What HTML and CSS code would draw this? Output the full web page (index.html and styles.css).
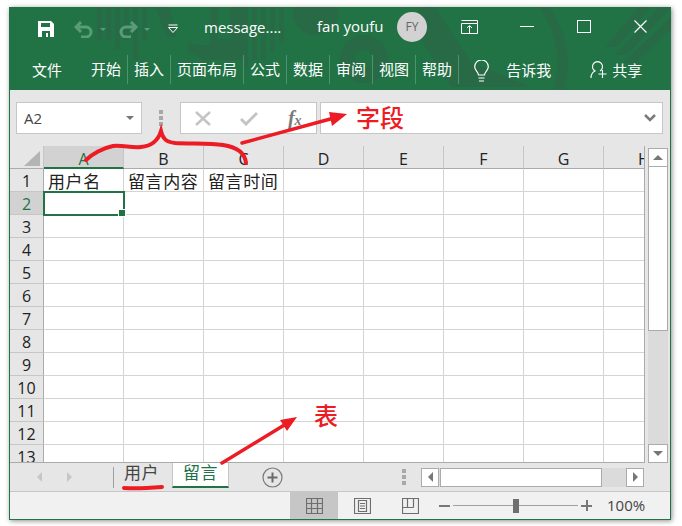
FILE: index.html
```html
<!DOCTYPE html>
<html lang="zh-CN">
<head>
    <meta charset="UTF-8">
    <title>message - Excel</title>
    <link rel="stylesheet" href="styles.css">
</head>
<body>
<div class="window">
    <header class="ribbon">
        <svg class="pattern" width="662" height="83" viewBox="0 0 662 83">
            <g fill="#286a45">
                <rect x="88" y="0" width="5" height="33"/><rect x="97" y="0" width="5" height="33"/><rect x="106" y="0" width="5" height="42"/>
                <rect x="115" y="0" width="5" height="33"/><rect x="124" y="0" width="5" height="53"/><rect x="133" y="0" width="5" height="33"/>
                <path d="M146 0h14l8 30h-10zM170 0h9v45l16 8h40V0h-14v32h-12V0h-8v38h-14l-8-3V0h-9z"/>
                <rect x="225" y="0" width="5" height="45"/><rect x="234" y="0" width="5" height="60"/><rect x="243" y="0" width="5" height="53"/>
                <rect x="252" y="0" width="5" height="53"/><rect x="261" y="0" width="5" height="45"/><rect x="270" y="0" width="5" height="36"/>
                <path d="M284 0h45v10a23 23 0 0 1-45 0z"/>
                <path d="M355 28a24 24 0 1 0 .1 0zm0 15a9 9 0 1 1-.1 0z"/>
                <path d="M410 0h16l36 55 60 25h-80l-32-50zM530 0h10a100 100 0 0 1 16 82h-12a90 90 0 0 0-14-82z"/>
                <path d="M630 0h12l-34 40h-12zM650 0h12l-44 48h-12zM662 10v12l-36 34h-12z"/>
            </g>
        </svg>
        <div class="titlebar">
            <svg class="save" width="18" height="18" viewBox="0 0 18 18"><path fill="#fff" d="M1 1h13l3 3v13H1z"/><path fill="#217346" d="M4 3h9v4H4zM5 11h8v6h-2v-4H9v4H5z"/></svg>
            <svg class="undo" width="34" height="18" viewBox="0 0 34 18"><path fill="none" stroke="#5a9c78" stroke-width="3" d="M2 7h10a5 5 0 0 1 0 10H7M7 2L2 7l5 5"/><path fill="#5a9c78" d="M26 8h6l-3 3z"/></svg>
            <svg class="redo" width="34" height="18" viewBox="0 0 34 18"><path fill="none" stroke="#5a9c78" stroke-width="3" d="M17 7H7a5 5 0 0 0 0 10h5M12 2l5 5-5 5"/><path fill="#5a9c78" d="M25 8h6l-3 3z"/></svg>
            <svg class="qat-more" width="10" height="10" viewBox="0 0 10 10"><path fill="none" stroke="#fff" d="M.5 3.500h9L5 8.500zM.5 1h9"/></svg>
            <span class="doc-name">message....</span>
            <span class="user-name">fan youfu</span>
            <span class="avatar">FY</span>
            <svg class="display-btn" width="18" height="14" viewBox="0 0 18 14"><path fill="none" stroke="#fff" d="M.5 3.500h16v10H.5zM.5.5h16v3M8.500 13V6M6 8l2.500-2.500L11 8"/></svg>
            <span class="min-btn"></span>
            <span class="max-btn"></span>
            <svg class="close-btn" width="13" height="13" viewBox="0 0 13 13"><path fill="none" stroke="#fff" stroke-width="1.200" d="M.5.5l12 12M12.500.5l-12 12"/></svg>
        </div>
        <nav class="menu">
            <span class="tab-file">文件</span>
            <span class="tab">开始</span>
            <span class="tab">插入</span>
            <span class="tab">页面布局</span>
            <span class="tab">公式</span>
            <span class="tab">数据</span>
            <span class="tab">审阅</span>
            <span class="tab">视图</span>
            <span class="tab tab-last">帮助</span>
            <svg class="bulb" width="15" height="23" viewBox="0 0 15 23"><path fill="none" stroke="#fff" stroke-width="1.200" d="M4.500 15c0-3-3.800-4.500-3.800-8.300a6.800 6.800 0 0 1 13.600 0C14.300 10.500 10.500 12 10.500 15zM4.500 18h6M5 21h5"/></svg>
            <span class="tell">告诉我</span>
            <svg class="share" width="17" height="19" viewBox="0 0 17 19"><path fill="none" stroke="#fff" stroke-width="1.100" d="M1 18c0-4 2-6 4-7a5 5 0 1 1 5 0M12.500 10v8M8.500 14h8"/></svg>
            <span class="share-text">共享</span>
        </nav>
    </header>

    <section class="formula-bar">
        <div class="name-box"><span>A2</span><i class="caret"></i></div>
        <div class="dots"><i></i><i></i><i></i></div>
        <div class="fx-box">
            <svg width="16" height="15" viewBox="0 0 16 15"><path fill="none" stroke="#c4c4c4" stroke-width="2.500" d="M1 1l14 13M15 1L1 14"/></svg>
            <svg width="18" height="15" viewBox="0 0 18 15"><path fill="none" stroke="#c4c4c4" stroke-width="3" d="M1 8l5 5L17 2"/></svg>
            <span class="fx">f<sub>x</sub></span>
        </div>
        <div class="formula-input"><svg width="12" height="8" viewBox="0 0 12 8"><path fill="none" stroke="#7a7a7a" stroke-width="2.500" d="M1 1l5 5 5-5"/></svg></div>
    </section>

    <section class="sheet">
        <div class="grid">
            <div class="row head">
                <div class="corner"><i></i></div>
                <div class="col active">A</div><div class="col">B</div><div class="col">C</div><div class="col">D</div><div class="col">E</div><div class="col">F</div><div class="col">G</div><div class="col last">H</div>
            </div>
            <div class="row"><div class="rh">1</div><div class="c">用户名</div><div class="c">留言内容</div><div class="c">留言时间</div><div class="c"></div><div class="c"></div><div class="c"></div><div class="c"></div><div class="c end"></div></div>
            <div class="row"><div class="rh active">2</div><div class="c selected"></div><div class="c"></div><div class="c"></div><div class="c"></div><div class="c"></div><div class="c"></div><div class="c"></div><div class="c end"></div></div>
            <div class="row"><div class="rh">3</div><div class="c"></div><div class="c"></div><div class="c"></div><div class="c"></div><div class="c"></div><div class="c"></div><div class="c"></div><div class="c end"></div></div>
            <div class="row"><div class="rh">4</div><div class="c"></div><div class="c"></div><div class="c"></div><div class="c"></div><div class="c"></div><div class="c"></div><div class="c"></div><div class="c end"></div></div>
            <div class="row"><div class="rh">5</div><div class="c"></div><div class="c"></div><div class="c"></div><div class="c"></div><div class="c"></div><div class="c"></div><div class="c"></div><div class="c end"></div></div>
            <div class="row"><div class="rh">6</div><div class="c"></div><div class="c"></div><div class="c"></div><div class="c"></div><div class="c"></div><div class="c"></div><div class="c"></div><div class="c end"></div></div>
            <div class="row"><div class="rh">7</div><div class="c"></div><div class="c"></div><div class="c"></div><div class="c"></div><div class="c"></div><div class="c"></div><div class="c"></div><div class="c end"></div></div>
            <div class="row"><div class="rh">8</div><div class="c"></div><div class="c"></div><div class="c"></div><div class="c"></div><div class="c"></div><div class="c"></div><div class="c"></div><div class="c end"></div></div>
            <div class="row"><div class="rh">9</div><div class="c"></div><div class="c"></div><div class="c"></div><div class="c"></div><div class="c"></div><div class="c"></div><div class="c"></div><div class="c end"></div></div>
            <div class="row"><div class="rh">10</div><div class="c"></div><div class="c"></div><div class="c"></div><div class="c"></div><div class="c"></div><div class="c"></div><div class="c"></div><div class="c end"></div></div>
            <div class="row"><div class="rh">11</div><div class="c"></div><div class="c"></div><div class="c"></div><div class="c"></div><div class="c"></div><div class="c"></div><div class="c"></div><div class="c end"></div></div>
            <div class="row"><div class="rh">12</div><div class="c"></div><div class="c"></div><div class="c"></div><div class="c"></div><div class="c"></div><div class="c"></div><div class="c"></div><div class="c end"></div></div>
            <div class="row"><div class="rh">13</div><div class="c"></div><div class="c"></div><div class="c"></div><div class="c"></div><div class="c"></div><div class="c"></div><div class="c"></div><div class="c end"></div></div>
        </div>
        <div class="vscroll">
            <div class="sb-btn"><i class="arrow-up"></i></div>
            <div class="v-thumb"></div>
            <div class="v-track"></div>
            <div class="sb-btn"><i class="arrow-down"></i></div>
        </div>
    </section>

    <section class="tabs">
        <i class="nav-left"></i>
        <i class="nav-right"></i>
        <span class="tab-sep"></span>
        <span class="sheet-tab">用户</span>
        <span class="sheet-tab current">留言</span>
        <span class="add-sheet"><svg width="21" height="21" viewBox="0 0 21 21"><circle cx="10.500" cy="10.500" r="9.500" fill="none" stroke="#7a7a7a" stroke-width="1.200"/><path fill="none" stroke="#6a6a6a" stroke-width="2" d="M10.500 5.500v10M5.500 10.500h10"/></svg></span>
        <div class="dots tab-dots"><i></i><i></i><i></i></div>
        <div class="hscroll">
            <div class="hs-btn"><i class="arrow-left"></i></div>
            <div class="h-thumb"></div>
            <div class="h-track"></div>
            <div class="hs-btn"><i class="arrow-right"></i></div>
        </div>
    </section>

    <footer class="status">
        <div class="view-btn on"><svg width="17" height="16" viewBox="0 0 17 16"><path fill="none" stroke="#6e6e6e" stroke-width="1.200" d="M.5.500h16v15H.5zM.5 5.500h16M.5 10.500h16M5.500.5v15M11.500.5v15"/></svg></div>
        <div class="view-btn"><svg width="17" height="16" viewBox="0 0 17 16"><path fill="none" stroke="#6e6e6e" stroke-width="1.200" d="M.5.500h16v15H.5zM4.500 2.500h8v11h-8zM6 5.500h5M6 8h5M6 10.500h5"/></svg></div>
        <div class="view-btn"><svg width="17" height="16" viewBox="0 0 17 16"><path fill="none" stroke="#6e6e6e" stroke-width="1.200" d="M.5.500h16v15H.5zM.5 9.500h11M5.500.5v9M11.500.5v9"/></svg></div>
        <div class="zoom">
            <i class="zoom-minus"></i>
            <div class="slider"><i class="slider-thumb"></i></div>
            <i class="zoom-plus"></i>
        </div>
        <span class="percent">100%</span>
    </footer>
</div>

<!-- red notes drawn over the screenshot -->
<svg class="notes" width="682" height="526" viewBox="0 0 682 526">
    <g fill="none" stroke="#ed1c24" stroke-linecap="round">
        <path stroke-width="4" d="M86 160c6-6 17-12 27-14 10-1 18 2 28 1 11-1 17-6 20-16 2 8 5 11 14 12 16 1 34 0 48 2 13 2 22 7 23 18"/>
        <path stroke-width="3.500" d="M242 143l92-25"/>
        <path stroke-width="3.500" d="M222 463l64-39"/>
        <path stroke-width="4" d="M124 488c12 1 26 0 38-1"/>
    </g>
    <path fill="#ed1c24" d="M347 114l-15 12-3-14zM297 417l-10 14-7-11z"/>
</svg>
<span class="note note-field">字段</span>
<span class="note note-table">表</span>
</body>
</html>
```
FILE: styles.css
```css
* {
    box-sizing: border-box;
}

body {
    margin: 0;
    width: 682px;
    height: 526px;
    padding: 7px 0 0 9px;
    position: relative;
    overflow: hidden;
    background: #fff;
    font-family: "Open Sans", "Noto Sans CJK SC", sans-serif;
}

i {
    display: block;
}

.window {
    width: 662px;
    height: 513px;
    display: flex;
    flex-direction: column;
    background: #e6e6e6;
    border: 1px solid #217346;
    border-top: 0;
    box-shadow: 1px 1px 5px rgba(0, 0, 0, 0.45);
}

/* title + menu */
.ribbon {
    height: 83px;
    flex: none;
    margin: 0 -1px;
    background: #217346;
    color: #fff;
    position: relative;
    overflow: hidden;
}

.pattern {
    position: absolute;
    left: 0;
    top: 0;
}

.titlebar,
.menu {
    position: relative;
    display: flex;
    align-items: center;
}

.titlebar {
    height: 44px;
    padding-left: 28px;
    font-size: 15px;
}

.undo {
    margin-left: 19px;
}

.redo {
    margin-left: 11px;
}

.qat-more {
    margin-left: 15px;
}

.doc-name {
    width: 113px;
    margin: 0 0 4px 26px;
    white-space: nowrap;
}

.user-name {
    width: 80px;
    margin-bottom: 7px;
    white-space: nowrap;
}

.avatar {
    width: 30px;
    height: 30px;
    margin-bottom: 5px;
    border-radius: 50%;
    background: #d2d2d2;
    color: #666;
    font-size: 12px;
    display: flex;
    align-items: center;
    justify-content: center;
}

.display-btn {
    margin: 0 0 5px 34px;
}

.min-btn {
    width: 14px;
    height: 1px;
    margin: 0 0 5px 41px;
    background: #fff;
}

.max-btn {
    width: 14px;
    height: 13px;
    margin: 0 0 5px 43px;
    border: 1px solid #fff;
}

.close-btn {
    margin: 0 0 5px 43px;
}

.menu {
    height: 38px;
    padding: 0 0 1px 23px;
    font-size: 15px;
}

.tab-file {
    width: 59px;
}

.tab {
    height: 29px;
    line-height: 29px;
    padding-right: 6px;
    margin-right: 6px;
    border-right: 1px solid #4f9270;
    white-space: nowrap;
}

.tab-last {
    margin-right: 15px;
}

.bulb {
    margin-top: 3px;
}

.tell {
    margin-left: 17px;
    width: 84px;
}

.share-text {
    margin-left: 5px;
}

/* formula bar */
.formula-bar {
    height: 56px;
    flex: none;
    padding: 12px 7px 12px 6px;
    display: flex;
    align-items: stretch;
}

.name-box,
.fx-box,
.formula-input {
    background: #fff;
    border: 1px solid #c6c6c6;
    display: flex;
    align-items: center;
}

.name-box {
    width: 126px;
    padding: 0 7px;
    justify-content: space-between;
    font-size: 15px;
    line-height: 26px;
    color: #444;
}

.caret {
    width: 0;
    height: 0;
    border: 4px solid transparent;
    border-top: 4px solid #777;
    border-bottom: 0;
}

.dots {
    width: 38px;
    display: flex;
    flex-direction: column;
    align-items: center;
    justify-content: center;
    gap: 2px;
}

.dots i {
    width: 4px;
    height: 4px;
    background: #a8a8a8;
}

.fx-box {
    width: 137px;
    padding: 0 14px;
    justify-content: space-between;
}

.fx {
    font-family: "Liberation Serif", serif;
    font-size: 20px;
    font-style: italic;
    font-weight: bold;
    color: #7a7a7a;
    line-height: 1;
}

.fx sub {
    font-size: 14px;
    vertical-align: baseline;
}

.formula-input {
    width: 344px;
    margin-left: 3px;
    padding-right: 6px;
    justify-content: flex-end;
}

/* cells */
.sheet {
    height: 317px;
    flex: none;
    display: flex;
    align-items: stretch;
}

.grid {
    width: 635px;
    height: 317px;
    overflow: hidden;
    background: #fff;
    border-right: 1px solid #ababab;
    border-bottom: 1px solid #ababab;
}

.row {
    display: flex;
    height: 23px;
}

.row.head {
    background: #e6e6e6;
}

.corner {
    width: 34px;
    flex: none;
    padding: 5px 0 0 14px;
    border-right: 1px solid #c6c6c6;
    border-bottom: 1px solid #ababab;
}

.corner i {
    width: 0;
    height: 0;
    border-style: solid;
    border-width: 0 0 15px 16px;
    border-color: transparent transparent #b4b4b4 transparent;
}

.col {
    width: 80px;
    flex: none;
    text-align: center;
    font-size: 16px;
    line-height: 26px;
    color: #222;
    border-right: 1px solid #c6c6c6;
    border-bottom: 1px solid #ababab;
}

.col.active {
    background: #d2d2d2;
    color: #217346;
    border-bottom: 2px solid #217346;
}

.col.last {
    width: 41px;
    border-right: 0;
    text-align: left;
    padding-left: 34px;
    overflow: hidden;
}

.rh {
    width: 34px;
    flex: none;
    background: #e6e6e6;
    border-right: 1px solid #ababab;
    border-bottom: 1px solid #c6c6c6;
    text-align: center;
    font-size: 16px;
    line-height: 25px;
    color: #222;
}

.rh.active {
    background: #d2d2d2;
    color: #217346;
}

.c {
    width: 80px;
    flex: none;
    padding-left: 4px;
    border-right: 1px solid #d4d4d4;
    border-bottom: 1px solid #d4d4d4;
    font-size: 17px;
    letter-spacing: 0.600px;
    line-height: 26px;
    color: #222;
    white-space: nowrap;
}

.c.end {
    width: 40px;
    border-right: 0;
}

.c.selected {
    position: relative;
    outline: 2px solid #217346;
    outline-offset: -1px;
}

.c.selected::after {
    content: "";
    position: absolute;
    right: -3px;
    bottom: -3px;
    width: 6px;
    height: 6px;
    background: #217346;
    border: 1px solid #fff;
}

/* scroll bars */
.vscroll {
    width: 20px;
    margin: 2px 0 0 3px;
    display: flex;
    flex-direction: column;
}

.sb-btn {
    height: 19px;
    flex: none;
    background: #fff;
    border: 1px solid #ababab;
    display: flex;
    align-items: center;
    justify-content: center;
}

.arrow-up,
.arrow-down {
    width: 0;
    height: 0;
    border-left: 5px solid transparent;
    border-right: 5px solid transparent;
}

.arrow-up {
    border-bottom: 5px solid #777;
}

.arrow-down {
    border-top: 5px solid #777;
}

.v-thumb {
    height: 164px;
    flex: none;
    background: #fff;
    border: 1px solid #ababab;
    border-top: 0;
}

.v-track {
    flex: 1;
    background: #dbdbdb;
}

/* sheet tabs */
.tabs {
    height: 29px;
    flex: none;
    display: flex;
    align-items: center;
    border-bottom: 1px solid #c6c6c6;
}

.nav-left,
.nav-right {
    width: 0;
    height: 0;
    border-top: 5px solid transparent;
    border-bottom: 5px solid transparent;
}

.nav-left {
    margin-left: 27px;
    border-right: 5px solid #c6c6c6;
}

.nav-right {
    margin-left: 25px;
    border-left: 5px solid #c6c6c6;
}

.tab-sep {
    width: 1px;
    height: 21px;
    margin-left: 41px;
    background: #a0a0a0;
}

.sheet-tab {
    width: 58px;
    height: 25px;
    padding-left: 10px;
    align-self: flex-start;
    font-size: 17px;
    color: #444;
    letter-spacing: 0.500px;
    line-height: 20px;
    white-space: nowrap;
}

.sheet-tab.current {
    width: 57px;
    padding-left: 10px;
    background: #fff;
    color: #217346;
    border-bottom: 2px solid #217346;
    border-left: 1px solid #c6c6c6;
    border-right: 1px solid #c6c6c6;
}

.add-sheet {
    margin-left: 33px;
    height: 21px;
}

.tab-dots {
    width: 8px;
    margin-left: 117px;
}

.hscroll {
    width: 223px;
    height: 19px;
    margin-left: 13px;
    display: flex;
    background: #dbdbdb;
}

.hs-btn {
    width: 18px;
    flex: none;
    background: #fff;
    border: 1px solid #ababab;
    display: flex;
    align-items: center;
    justify-content: center;
}

.arrow-left,
.arrow-right {
    width: 0;
    height: 0;
    border-top: 5px solid transparent;
    border-bottom: 5px solid transparent;
}

.arrow-left {
    border-right: 5px solid #777;
}

.arrow-right {
    border-left: 5px solid #777;
}

.h-thumb {
    width: 162px;
    margin-left: 1px;
    background: #fff;
    border: 1px solid #ababab;
}

.h-track {
    flex: 1;
}

/* status bar */
.status {
    flex: 1;
    background: #f1f1f1;
    display: flex;
    align-items: stretch;
    padding-left: 280px;
}

.view-btn {
    width: 48px;
    display: flex;
    align-items: center;
    justify-content: center;
}

.view-btn.on {
    background: #c6c6c6;
}

.zoom {
    margin-left: 5px;
    width: 155px;
    display: flex;
    align-items: center;
}

.zoom-minus {
    width: 11px;
    height: 2px;
    background: #777;
}

.slider {
    width: 125px;
    height: 1px;
    margin: 0 3px;
    background: #a0a0a0;
    display: flex;
    justify-content: center;
    align-items: center;
}

.slider-thumb {
    width: 6px;
    height: 14px;
    background: #6f6f6f;
}

.zoom-plus {
    width: 11px;
    height: 11px;
    background:
        linear-gradient(#777, #777) center / 11px 2px no-repeat,
        linear-gradient(#777, #777) center / 2px 11px no-repeat;
}

.percent {
    margin-left: 13px;
    font-size: 15px;
    line-height: 27px;
    color: #444;
}

/* annotations */
.notes {
    position: absolute;
    left: 0;
    top: 0;
    pointer-events: none;
}

.note {
    position: absolute;
    color: #ed1c24;
    font-size: 24px;
    font-weight: 500;
    line-height: 30px;
    font-family: "Noto Sans CJK SC", sans-serif;
}

.note-field {
    left: 356px;
    top: 102px;
}

.note-table {
    left: 314px;
    top: 400px;
}
```
